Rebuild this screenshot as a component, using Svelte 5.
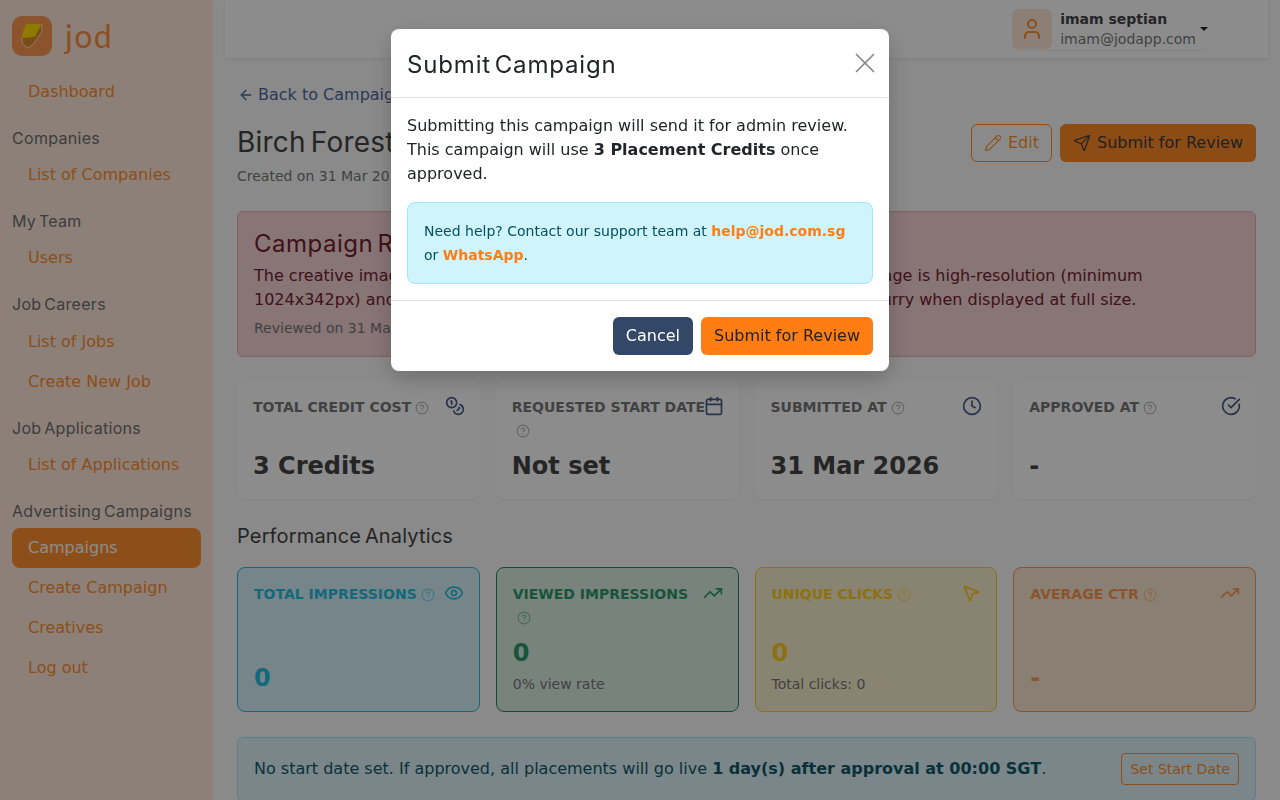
<script>
  const icons = {
    coins: '<circle cx="8" cy="8" r="6"/><path d="M18.09 10.37A6 6 0 1 1 10.34 18"/><path d="M7 6h1v4"/><path d="m16.71 13.88.7.71-2.82 2.82"/>',
    calendar: '<path d="M8 2v4"/><path d="M16 2v4"/><rect x="3" y="4" width="18" height="18" rx="2"/><path d="M3 10h18"/>',
    clock: '<circle cx="12" cy="12" r="10"/><polyline points="12 6 12 12 16 14"/>',
    check: '<path d="M21.801 10A10 10 0 1 1 17 3.335"/><path d="m9 11 3 3L22 4"/>',
    eye: '<path d="M2.062 12.348a1 1 0 0 1 0-.696 10.75 10.75 0 0 1 19.876 0 1 1 0 0 1 0 .696 10.75 10.75 0 0 1-19.876 0"/><circle cx="12" cy="12" r="3"/>',
    trend: '<polyline points="22 7 13.5 15.5 8.5 10.5 2 17"/><polyline points="16 7 22 7 22 13"/>',
    pointer: '<path d="M4.037 4.688a.495.495 0 0 1 .651-.651l16 6.5a.5.5 0 0 1-.063.947l-6.124 1.58a2 2 0 0 0-1.438 1.435l-1.579 6.126a.5.5 0 0 1-.947.063z"/>',
    send: '<path d="M14.536 21.686a.5.5 0 0 0 .937-.024l6.5-19a.496.496 0 0 0-.635-.635l-19 6.5a.5.5 0 0 0-.024.937l7.93 3.18a2 2 0 0 1 1.112 1.11z"/><path d="m21.854 2.147-10.94 10.939"/>',
    pencil: '<path d="M21.174 6.812a1 1 0 0 0-3.986-3.987L3.842 16.174a2 2 0 0 0-.5.83l-1.321 4.352a.5.5 0 0 0 .623.622l4.353-1.32a2 2 0 0 0 .83-.497z"/><path d="m15 5 4 4"/>',
    user: '<path d="M19 21v-2a4 4 0 0 0-4-4H9a4 4 0 0 0-4 4v2"/><circle cx="12" cy="7" r="4"/>',
    back: '<path d="m12 19-7-7 7-7"/><path d="M19 12H5"/>',
    help: '<circle cx="12" cy="12" r="10"/><path d="M9.09 9a3 3 0 0 1 5.83 1c0 2-3 3-3 3"/><path d="M12 17h.01"/>',
    close: '<path d="M18 6 6 18"/><path d="m6 6 12 12"/>'
  };

  const nav = [
    { items: ['Dashboard'] },
    { title: 'Companies', items: ['List of Companies'] },
    { title: 'My Team', items: ['Users'] },
    { title: 'Job Careers', items: ['List of Jobs', 'Create New Job'] },
    { title: 'Job Applications', items: ['List of Applications'] },
    { title: 'Advertising Campaigns', items: ['Campaigns', 'Create Campaign', 'Creatives', 'Log out'] }
  ];

  const stats = [
    { label: 'Total Credit Cost', icon: 'coins', value: '3 Credits' },
    { label: 'Requested Start Date', icon: 'calendar', value: 'Not set' },
    { label: 'Submitted At', icon: 'clock', value: '31 Mar 2026' },
    { label: 'Approved At', icon: 'check', value: '-' }
  ];

  const analytics = [
    { label: 'Total Impressions', icon: 'eye', value: '0', tone: 'cyan' },
    { label: 'Viewed Impressions', icon: 'trend', value: '0', sub: '0% view rate', tone: 'green' },
    { label: 'Unique Clicks', icon: 'pointer', value: '0', sub: 'Total clicks: 0', tone: 'yellow' },
    { label: 'Average CTR', icon: 'trend', value: '-', tone: 'orange' }
  ];
</script>

{#snippet icon(name, size = 20)}
  <svg class="icon" width={size} height={size} viewBox="0 0 24 24" fill="none" stroke="currentColor" stroke-width="2" stroke-linecap="round" stroke-linejoin="round">{@html icons[name]}</svg>
{/snippet}

<div class="layout">
  <aside class="sidebar">
    <div class="brand">
      <span class="logo">
        <svg width="40" height="40" viewBox="0 0 40 40">
          <path d="M9.7 22.3 L10.7 27.3 L14.7 32 L21 29 L29.7 15.7 L29.7 8" fill="#e08a30" stroke="#fff" stroke-width="0.7"/>
          <path d="M14.7 8 L29.7 8 L23 20.7 L9.7 22.3 L11.3 14 Z" fill="#ffe000"/>
        </svg>
      </span>
      <span class="wordmark">jod</span>
    </div>
    {#each nav as group}
      <div class="group">
        {#if group.title}<div class="group-title">{group.title}</div>{/if}
        {#each group.items as item}
          <a href="#top" class="nav-link" class:active={item === 'Campaigns'}>{item}</a>
        {/each}
      </div>
    {/each}
  </aside>

  <div class="main">
    <header class="topbar">
      <div class="user">
        <span class="avatar">{@render icon('user', 24)}</span>
        <div class="who">
          <strong>imam septian</strong>
          <span>imam@jodapp.com</span>
        </div>
        <span class="caret"></span>
      </div>
    </header>

    <main class="content">
      <a href="#top" class="back">{@render icon('back', 16)} Back to Campaigns</a>

      <div class="page-head">
        <div>
          <h1>Birch Forest Campaign</h1>
          <p class="created">Created on 31 Mar 2026</p>
        </div>
        <div class="actions">
          <button class="btn outline">{@render icon('pencil', 18)} Edit</button>
          <button class="btn primary">{@render icon('send', 18)} Submit for Review</button>
        </div>
      </div>

      <section class="review">
        <h2>Campaign Rejected</h2>
        <p>The creative image appears to be of very low quality. Please make sure the image is high-resolution (minimum 1024x342px) and that the final digital artwork does not appear pixelated or blurry when displayed at full size.</p>
        <small>Reviewed on 31 Mar 2026</small>
      </section>

      <section class="cards">
        {#each stats as s}
          <div class="card">
            <div class="card-head">
              <span class="label">{s.label}<span class="hint">{@render icon('help', 14)}</span></span>
              <span class="card-icon">{@render icon(s.icon)}</span>
            </div>
            <div class="value">{s.value}</div>
          </div>
        {/each}
      </section>

      <h3>Performance Analytics</h3>

      <section class="cards analytics">
        {#each analytics as a}
          <div class="card metric {a.tone}">
            <div class="card-head">
              <span class="label">{a.label}<span class="hint">{@render icon('help', 14)}</span></span>
              <span class="card-icon">{@render icon(a.icon)}</span>
            </div>
            <div class="value">{a.value}</div>
            {#if a.sub}<div class="sub">{a.sub}</div>{/if}
          </div>
        {/each}
      </section>

      <section class="banner">
        <p>No start date set. If approved, all placements will go live <strong>1 day(s) after approval at 00:00 SGT</strong>.</p>
        <button class="btn outline small">Set Start Date</button>
      </section>
    </main>
  </div>
</div>

<div class="backdrop"></div>

<div class="modal">
  <div class="modal-head">
    <h2>Submit Campaign</h2>
    <button class="close" aria-label="Close">{@render icon('close', 34)}</button>
  </div>
  <div class="modal-body">
    <p>Submitting this campaign will send it for admin review. This campaign will use <strong>3 Placement Credits</strong> once approved.</p>
    <div class="info">
      Need help? Contact our support team at <a href="#top">help@jod.com.sg</a> or <a href="#top">WhatsApp</a>.
    </div>
  </div>
  <div class="modal-foot">
    <button class="btn navy">Cancel</button>
    <button class="btn solid">Submit for Review</button>
  </div>
</div>

<style>
  :global(body) {
    margin: 0;
    font-family: "DejaVu Sans", sans-serif;
    font-size: 16px;
    line-height: 1.5;
    color: #212529;
    overflow: hidden;
  }

  .icon {
    display: inline-block;
    flex: none;
  }

  .layout {
    display: flex;
    height: 100vh;
    overflow: hidden;
    background: #fbfbfb;
    color: #444;
  }

  .sidebar {
    width: 213px;
    flex: none;
    box-sizing: border-box;
    padding: 16px 12px 0;
    background: #ffeadb;
  }

  .brand {
    display: flex;
    align-items: center;
    gap: 13px;
    height: 40px;
    margin-bottom: 15.5px;
  }

  .logo {
    width: 40px;
    height: 40px;
    border-radius: 10px;
    background: #ff9a50;
  }

  .wordmark {
    font-family: Lato, sans-serif;
    font-size: 32px;
    line-height: 40px;
    color: #ff9040;
    letter-spacing: 1.5px;
  }

  .group {
    margin-bottom: 14.25px;
  }

  .group-title {
    font-family: Inter, sans-serif;
    line-height: 24px;
    margin-bottom: 5.1px;
    word-spacing: -2px;
    letter-spacing: 0.3px;
    color: #707070;
  }

  .nav-link {
    display: block;
    height: 40px;
    line-height: 40px;
    padding: 0 16px;
    border-radius: 8px;
    color: #ff8f30;
    text-decoration: none;
  }

  .nav-link.active {
    background: #ff9030;
    color: #fff;
  }

  .main {
    flex: 1;
    min-width: 0;
  }

  .topbar {
    display: flex;
    justify-content: flex-end;
    height: 58px;
    box-sizing: border-box;
    margin: 0 12px;
    padding: 9px 60px 0 0;
    background: #fff;
    box-shadow: 0 1px 3px rgba(0, 0, 0, 0.1);
  }

  .user {
    display: flex;
    height: 41px;
    gap: 8px;
    border-bottom: 1px solid #f0f0f0;
    border-radius: 0 0 8px 8px;
  }

  .avatar {
    display: grid;
    place-items: center;
    width: 40px;
    height: 40px;
    border-radius: 6px;
    background: #ffe8d5;
    color: #ff8f30;
  }

  .who {
    display: flex;
    flex-direction: column;
    font-size: 14px;
    line-height: 21px;
  }

  .who span {
    margin-top: -1px;
    color: #777;
  }

  .caret {
    width: 0;
    height: 0;
    margin: 18px 0 0 -4px;
    border: 4px solid transparent;
    border-top-color: #212529;
    border-bottom: 0;
  }

  .content {
    padding: 25px 24px 0 24px;
  }

  .back {
    display: flex;
    width: fit-content;
    align-items: center;
    gap: 4px;
    margin-left: 1px;
    color: #4b6a9b;
    text-decoration: none;
  }

  .page-head {
    display: flex;
    justify-content: space-between;
    margin: 17px 0 24px;
  }

  h1, h2, h3 {
    margin: 0;
    font-family: Inter, sans-serif;
    font-weight: 400;
    word-spacing: -3px;
  }

  h1 {
    font-size: 28px;
    line-height: 36px;
    letter-spacing: 0.2px;
  }

  .created {
    margin: 6px 0 0;
    font-size: 14px;
    line-height: 21px;
    color: #777;
  }

  .actions {
    display: flex;
    gap: 8px;
    align-items: flex-start;
  }

  .btn {
    display: inline-flex;
    align-items: center;
    gap: 6px;
    height: 38px;
    box-sizing: border-box;
    padding: 0 12px;
    border: 1px solid transparent;
    border-radius: 6px;
    font: inherit;
    color: #212529;
  }

  .btn .icon {
    stroke-width: 1.5;
  }

  .btn.outline {
    background: transparent;
    border-color: #ff9030;
    color: #ff9030;
  }

  .btn.primary {
    background: #ff8a25;
    color: #3a3d42;
  }

  .btn.solid {
    background: #ff7d12;
  }

  .btn.navy {
    background: #334766;
    color: #fff;
  }

  .btn.small {
    height: 32px;
    padding: 0 8px;
    font-size: 14px;
    border-radius: 4px;
  }

  .review {
    padding: 17px 16px;
    border: 1px solid #f1aeb5;
    border-radius: 6px;
    background: #f7d5d8;
    color: #74222e;
  }

  .review h2 {
    font-size: 24px;
    line-height: 30px;
    margin-bottom: 5px;
    letter-spacing: 0.5px;
  }

  .review p {
    margin: 0;
  }

  .review small {
    display: block;
    margin-top: 6px;
    font-size: 14px;
    line-height: 21px;
    color: #777;
  }

  .cards {
    display: grid;
    grid-template-columns: repeat(4, 1fr);
    gap: 16px;
    margin-top: 24px;
  }

  .cards.analytics {
    margin-top: 0;
  }

  .card {
    display: flex;
    flex-direction: column;
    padding: 16px;
    border-radius: 8px;
    background: #fff;
    box-shadow: 0 1px 2px rgba(0, 0, 0, 0.05);
  }

  .card-head {
    display: flex;
    justify-content: space-between;
    align-items: flex-start;
    min-height: 46px;
    margin: -1px 0 5px;
  }

  .label {
    font-size: 14px;
    font-weight: 700;
    line-height: 23px;
    text-transform: uppercase;
    color: #777;
  }

  .hint {
    display: inline-block;
    margin-left: 4px;
    vertical-align: -3px;
    line-height: 0;
    opacity: 0.5;
  }

  .card-icon {
    color: #445d88;
    line-height: 0;
    margin: 0 -1px 0 -1.7px;
  }

  .value {
    margin-top: auto;
    padding-top: 1px;
    margin-bottom: -1px;
    font-size: 24px;
    font-weight: 700;
    line-height: 36px;
  }

  .sub {
    margin-top: 4px;
    font-size: 14px;
    line-height: 21px;
    color: #777;
  }

  .metric {
    border: 1px solid;
    box-shadow: none;
  }

  .cyan { background: #d8f2f9; border-color: #26bde0; }
  .cyan .label, .cyan .value, .cyan .card-icon { color: #26bde0; }
  .green { background: #dcefe4; border-color: #1f8a5e; }
  .green .label, .green .value, .green .card-icon { color: #2a9a68; }
  .yellow { background: #f9efcf; border-color: #ffcc20; }
  .yellow .label, .yellow .value, .yellow .card-icon { color: #ffcc20; }
  .orange { background: #fbe8d2; border-color: #ff9a50; }
  .orange .label, .orange .value, .orange .card-icon { color: #ff9a50; }

  h3 {
    margin: 23px 0 17px;
    font-size: 20px;
    line-height: 28px;
    word-spacing: -2px;
    letter-spacing: 0.15px;
  }

  .banner {
    display: flex;
    align-items: center;
    justify-content: space-between;
    margin-top: 25px;
    padding: 15px 16px;
    border: 1px solid #9eeaf9;
    border-radius: 6px;
    background: #dff5fa;
    color: #125a6a;
  }

  .banner p {
    margin: 0;
  }

  .backdrop {
    position: fixed;
    inset: 0;
    background: rgba(0, 0, 0, 0.45);
  }

  .modal {
    position: fixed;
    top: 29px;
    left: 391px;
    width: 498px;
    border-radius: 8px;
    background: #fff;
    box-shadow: 0 8px 24px rgba(0, 0, 0, 0.2);
  }

  .modal-head {
    display: flex;
    align-items: center;
    justify-content: space-between;
    height: 69px;
    box-sizing: border-box;
    padding: 0 16px;
    border-bottom: 1px solid #dee2e6;
  }

  .modal-head h2 {
    font-size: 24px;
    line-height: 30px;
    margin-top: 3px;
    letter-spacing: 0.85px;
    word-spacing: -4px;
  }

  .close {
    display: grid;
    padding: 0;
    border: 0;
    background: none;
    color: #888;
    margin: 0 -9px 0 0;
  }

  .close .icon {
    stroke-width: 1.2;
  }

  .modal-body {
    padding: 16px;
    border-bottom: 1px solid #dee2e6;
  }

  .modal-body p {
    margin: 0 0 16px;
  }

  .info {
    padding: 16px;
    border: 1px solid #9eeaf9;
    border-radius: 8px;
    background: #cff4fc;
    color: #055160;
    font-size: 14px;
    line-height: 24px;
  }

  .info a {
    color: #ff7d12;
    font-weight: 700;
    text-decoration: none;
  }

  .modal-foot {
    display: flex;
    justify-content: flex-end;
    gap: 8px;
    padding: 16px;
  }
</style>
